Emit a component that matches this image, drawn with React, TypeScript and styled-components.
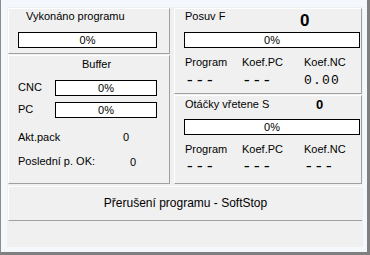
import styled, { createGlobalStyle } from "styled-components";

const Global = createGlobalStyle`
  body {
    margin: 0;
    font-family: "Liberation Sans", Arial, sans-serif;
    font-size: 11px;
    color: #000;
  }
`;

export default function App() {
  return (
    <Window>
      <Global />
      <Body>
        <TopRow>
          <Column>
            <Panel $h={46}>
              <Title $top={1} $left={17}>Vykonáno programu</Title>
              <Bar $w={139} $top={9} $left={9}>0%</Bar>
            </Panel>
            <Panel $h={129}>
              <Title $top={2} $left={73}>Buffer</Title>
              <BufRow $top={9}>
                <BufLabel>CNC</BufLabel>
                <Bar $w={102}>0%</Bar>
              </BufRow>
              <BufRow $top={6}>
                <BufLabel>PC</BufLabel>
                <Bar $w={102}>0%</Bar>
              </BufRow>
              <InfoRow $top={13}>
                <InfoLabel $w={105}>Akt.pack</InfoLabel>
                <span>0</span>
              </InfoRow>
              <InfoRow $top={11}>
                <InfoLabel $w={112}>Poslední p. OK:</InfoLabel>
                <InfoValue>0</InfoValue>
              </InfoRow>
            </Panel>
          </Column>
          <Column>
            <Panel $h={86}>
              <Header $top={1} $h={22}>
                <HeaderLabel $w={115}>Posuv F</HeaderLabel>
                <BigZero $size={17}>0</BigZero>
              </Header>
              <Bar $w={176} $left={9}>0%</Bar>
              <Grid $top={8}>
                <span>Program</span>
                <span>Koef.PC</span>
                <span>Koef.NC</span>
              </Grid>
              <Grid $top={4}>
                <Value $dash>---</Value>
                <Value $dash>---</Value>
                <Value>0.00</Value>
              </Grid>
            </Panel>
            <Panel $h={89}>
              <Header $top={2} $h={21}>
                <HeaderLabel $w={131}>Otáčky vřetene S</HeaderLabel>
                <BigZero $size={13}>0</BigZero>
              </Header>
              <Bar $w={176} $left={9}>0%</Bar>
              <Grid $top={8}>
                <span>Program</span>
                <span>Koef.PC</span>
                <span>Koef.NC</span>
              </Grid>
              <Grid $top={3}>
                <Value $dash>---</Value>
                <Value $dash>---</Value>
                <Value $dash>---</Value>
              </Grid>
            </Panel>
          </Column>
        </TopRow>
        <StatusStrip>Přerušení programu - SoftStop</StatusStrip>
      </Body>
    </Window>
  );
}

const Window = styled.div`
  box-sizing: border-box;
  width: 370px;
  height: 255px;
  padding: 7px 4px 5px 6px;
  background: #f4f7fb;
  border-left: 1px solid #8c8c8c;
  border-right: 3px solid #7f7f7f;
  border-bottom: 3px solid #7f7f7f;
`;

const Body = styled.div`
  box-sizing: border-box;
  height: 100%;
  padding: 1px 1px 0 1px;
  background: #f0f0f0;
  display: flex;
  flex-direction: column;
`;

const TopRow = styled.div`
  display: flex;
  gap: 4px;
`;

const Column = styled.div`
  display: flex;
  flex-direction: column;
  gap: 1px;
  &:first-child {
    width: 162px;
  }
  &:last-child {
    width: 188px;
  }
`;

const Panel = styled.div<{ $h: number }>`
  box-sizing: border-box;
  height: ${(p) => p.$h}px;
  border-top: 1px solid #fff;
  border-left: 1px solid #fff;
  border-right: 1px solid #a0a0a0;
  border-bottom: 1px solid #a0a0a0;
  display: flex;
  flex-direction: column;
  align-items: flex-start;
`;

const Title = styled.div<{ $top: number; $left: number }>`
  margin: ${(p) => p.$top}px 0 0 ${(p) => p.$left}px;
  line-height: 13px;
`;

const Bar = styled.div<{ $w: number; $top?: number; $left?: number }>`
  box-sizing: border-box;
  width: ${(p) => p.$w}px;
  height: 16px;
  margin: ${(p) => p.$top ?? 0}px 0 0 ${(p) => p.$left ?? 0}px;
  border: 1px solid #000;
  background: #fff;
  text-align: center;
  line-height: 14px;
`;

const BufRow = styled.div<{ $top: number }>`
  display: flex;
  align-items: flex-start;
  margin: ${(p) => p.$top}px 0 0 9px;
`;

const BufLabel = styled.span`
  width: 37px;
  line-height: 15px;
`;

const InfoRow = styled.div<{ $top: number }>`
  display: flex;
  margin: ${(p) => p.$top}px 0 0 9px;
  line-height: 13px;
`;

const InfoLabel = styled.span<{ $w: number }>`
  width: ${(p) => p.$w}px;
`;

const InfoValue = styled.span`
  margin-top: 1px;
`;

const Header = styled.div<{ $top: number; $h: number }>`
  display: flex;
  align-items: flex-start;
  height: ${(p) => p.$h}px;
  margin: ${(p) => p.$top}px 0 0 10px;
  line-height: 13px;
`;

const HeaderLabel = styled.span<{ $w: number }>`
  width: ${(p) => p.$w}px;
`;

const BigZero = styled.span<{ $size: number }>`
  font-weight: bold;
  font-size: ${(p) => p.$size}px;
  line-height: ${(p) => (p.$size > 14 ? 20 : 15)}px;
  margin-top: ${(p) => (p.$size > 14 ? 1 : -1)}px;
`;

const Grid = styled.div<{ $top: number }>`
  display: grid;
  grid-template-columns: 57px 62px auto;
  align-items: start;
  margin: ${(p) => p.$top}px 0 0 10px;
  line-height: 13px;
`;

const Value = styled.span<{ $dash?: boolean }>`
  font-family: "Liberation Mono", "Courier New", monospace;
  font-size: ${(p) => (p.$dash ? 16 : 13)}px;
  line-height: 15px;
  letter-spacing: ${(p) => (p.$dash ? 0.4 : 1.2)}px;
  margin-top: ${(p) => (p.$dash ? 1 : 0)}px;
`;

const StatusStrip = styled.div`
  box-sizing: border-box;
  height: 35px;
  margin-top: 2px;
  border-top: 1px solid #fff;
  border-left: 1px solid #fff;
  border-bottom: 1px solid #a0a0a0;
  display: flex;
  align-items: center;
  justify-content: center;
  font-size: 12px;
  padding-bottom: 1px;
`;
